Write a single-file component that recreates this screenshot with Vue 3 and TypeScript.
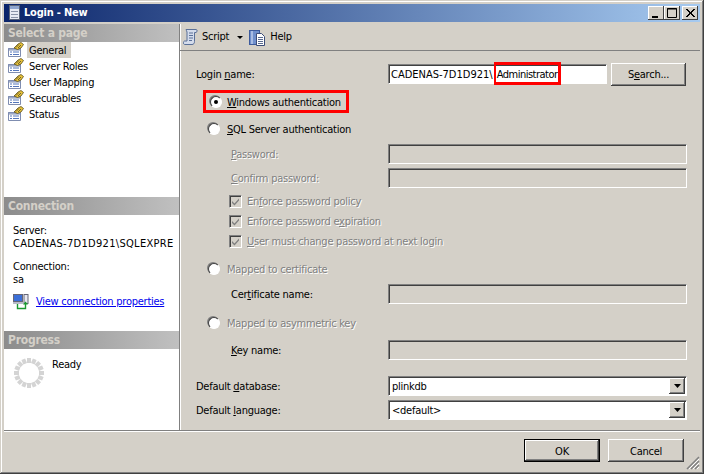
<script setup lang="ts">
const pages = ['General', 'Server Roles', 'User Mapping', 'Securables', 'Status']
const spokes = Array.from({ length: 16 }, (_, i) => i * 22.5)
</script>

<template>
  <div class="window">
    <header class="titlebar">
      <svg class="appicon" width="14" height="16" viewBox="0 0 14 16">
        <rect x="1.500" y="0.500" width="10" height="14" fill="#e8ecf4" stroke="#5a6478" />
        <rect x="2" y="1" width="9" height="3" fill="#8fa6d0" />
        <rect x="3" y="6" width="7" height="1" fill="#8a94a8" />
        <rect x="3" y="9" width="7" height="1" fill="#8a94a8" />
        <rect x="3" y="12" width="7" height="1" fill="#8a94a8" />
      </svg>
      <span class="title">Login - New</span>
      <span class="caption-btns">
        <span class="cap"><svg width="16" height="14" viewBox="0 0 16 14"><rect x="4" y="10" width="6" height="2" fill="#000" /></svg></span>
        <span class="cap"><svg width="16" height="14" viewBox="0 0 16 14"><path d="M3.500 2.500h9v9h-9z M3 3h10" fill="none" stroke="#000" /></svg></span>
        <span class="cap close"><svg width="16" height="14" viewBox="0 0 16 14"><path d="M4 3l8 8M5 3l8 8M12 3l-8 8M13 3l-8 8" fill="none" stroke="#000" /></svg></span>
      </span>
    </header>

    <div class="main">
      <aside class="side">
        <div class="side-head">Select a page</div>
        <ul class="pages">
          <li v-for="(p, i) in pages" :key="p" class="page">
            <svg width="16" height="16" viewBox="0 0 16 16" class="page-icon">
              <path d="M0.500 6.500h12v8h-12z" fill="#fff" stroke="#7f8db0" />
              <path d="M0.500 6.500h12v1.500h-12z" fill="#b9c6de" stroke="#7f8db0" />
              <path d="M2 10h2M5 10h6M2 12.500h2M5 12.500h6" stroke="#5577bb" />
              <path d="M6 6l4-4 3-1.500 2.500 2-2.500 3.500-3.500 1.500z" fill="#e9c33a" stroke="#5a4c18" stroke-width=".8" />
              <path d="M8 5.500l3-3M10 6l3-3" stroke="#3a3a28" stroke-width=".7" />
            </svg>
            <span class="page-label" :class="{ on: i === 0 }">{{ p }}</span>
          </li>
        </ul>
        <div class="side-head">Connection</div>
        <div class="conn">
          <p class="conn-line">Server:</p>
          <p class="conn-line caps">CADENAS-7D1D921\SQLEXPRE</p>
          <p class="conn-line gap">Connection:</p>
          <p class="conn-line">sa</p>
          <div class="conn-link">
            <svg width="16" height="16" viewBox="0 0 16 16">
              <rect x="0.500" y="0.500" width="9" height="7" fill="#3b6fd8" stroke="#667" />
              <rect x="0" y="8" width="10" height="2" fill="#b8bcc8" />
              <rect x="11" y="0.500" width="4" height="9" fill="#e8e8f0" stroke="#667" />
              <path d="M4.500 10v4.500h8V10" fill="none" stroke="#1a9a30" stroke-width="1.400" />
              <path d="M10 10.500h5l-2.500-3z" fill="#1a9a30" />
            </svg>
            <a class="link" href="#">View connection properties</a>
          </div>
        </div>
        <div class="side-head">Progress</div>
        <div class="progress">
          <svg width="30" height="30" viewBox="0 0 30 30" class="spinner">
            <rect v-for="a in spokes" :key="a" x="13" y="0" width="4" height="5" fill="#d4d4d4" :transform="`rotate(${a} 15 15)`" />
          </svg>
          <span>Ready</span>
        </div>
      </aside>

      <section class="content">
        <div class="toolbar">
          <svg width="16" height="18" viewBox="0 0 16 18">
            <path d="M3 1.500h10c1.500 0 1.500 2.500 0 3h-1.500v9c0 2-1 3-2.500 3H1.500c-1.500-.5-1.500-3 0-3.500H4v-9C4 3.500 3 2 3 1.500z" fill="#d4dcec" stroke="#5a7098" />
            <path d="M6 5h4M6 7.500h4M6 10h4M6 12.500h3" stroke="#5a7098" />
          </svg>
          <span class="tool-text">Script</span>
          <svg width="6" height="3" viewBox="0 0 6 3" class="caret"><path d="M0 0h6L3 3z" fill="#000" /></svg>
          <span class="tool-sep"></span>
          <svg width="17" height="17" viewBox="0 0 17 17">
            <rect x="0.500" y="1.500" width="10" height="14" fill="#6f8fcc" stroke="#3c5a9c" />
            <path d="M3 2v13" stroke="#a8bce4" stroke-width="2" />
            <path d="M7.500 4.500h5l3 3v9h-8z" fill="#fff" stroke="#3c4c78" />
            <path d="M9 8.500h5M9 10.500h5M9 12.500h5M9 14.500h5" stroke="#5a6a90" />
          </svg>
          <span class="tool-text help">Help</span>
        </div>

        <form class="form" @submit.prevent>
          <div class="row login-row">
            <label class="lab"><span>Login <u>n</u>ame:</span></label>
            <div class="login-input">
              <span class="field-text"><span class="caps-plain">CADENAS-7D1D921\</span><span class="admin">Administrator</span></span>
              <span class="red-mark"></span>
            </div>
            <button class="btn search" type="button">S<u>e</u>arch...</button>
          </div>

          <div class="opt-win">
            <span class="radio checked"></span>
            <span class="t"><u>W</u>indows authentication</span>
          </div>

          <div class="opt sql">
            <span class="radio"></span>
            <span class="t"><u>S</u>QL Server authentication</span>
          </div>

          <div class="row pw first">
            <label class="lab sub off"><u>P</u>assword:</label>
            <div class="input wide"></div>
          </div>
          <div class="row pw">
            <label class="lab sub off"><u>C</u>onfirm password:</label>
            <div class="input wide"></div>
          </div>

          <div class="check first">
            <span class="box"><svg width="9" height="9" viewBox="0 0 9 9"><path d="M1 4l2.500 2.500L8 1.500v2L3.500 8.500 1 6z" fill="#808080" /></svg></span>
            <span class="t off">En<u>f</u>orce password policy</span>
          </div>
          <div class="check">
            <span class="box"><svg width="9" height="9" viewBox="0 0 9 9"><path d="M1 4l2.500 2.500L8 1.500v2L3.500 8.500 1 6z" fill="#808080" /></svg></span>
            <span class="t off">Enforce password e<u>x</u>piration</span>
          </div>
          <div class="check">
            <span class="box"><svg width="9" height="9" viewBox="0 0 9 9"><path d="M1 4l2.500 2.500L8 1.500v2L3.500 8.500 1 6z" fill="#808080" /></svg></span>
            <span class="t off"><u>U</u>ser must change password at next login</span>
          </div>

          <div class="opt cert">
            <span class="radio"></span>
            <span class="t off">Mapped to certificate</span>
          </div>
          <div class="row name cert-name">
            <label class="lab sub">Cer<u>t</u>ificate name:</label>
            <div class="input wide"></div>
          </div>

          <div class="opt asym">
            <span class="radio"></span>
            <span class="t off">Mapped to asymmetric key</span>
          </div>
          <div class="row name key-name">
            <label class="lab sub"><u>K</u>ey name:</label>
            <div class="input wide"></div>
          </div>

          <div class="row db">
            <label class="lab">Default <u>d</u>atabase:</label>
            <div class="input wide white">
              <span class="field-text">plinkdb</span>
              <span class="arrow"><svg width="7" height="4" viewBox="0 0 7 4"><path d="M0 0h7L3.500 4z" fill="#000" /></svg></span>
            </div>
          </div>
          <div class="row lang">
            <label class="lab">Default <u>l</u>anguage:</label>
            <div class="input wide white">
              <span class="field-text">&lt;default&gt;</span>
              <span class="arrow"><svg width="7" height="4" viewBox="0 0 7 4"><path d="M0 0h7L3.500 4z" fill="#000" /></svg></span>
            </div>
          </div>
        </form>
      </section>
    </div>

    <footer class="footer">
      <button class="btn ok" type="button">OK</button>
      <button class="btn cancel" type="button">Cancel</button>
      <svg class="grip" width="14" height="14" viewBox="0 0 14 14">
        <path d="M13 1L1 13M13 5L5 13M13 9l-4 4" stroke="#808080" stroke-width="1.500" fill="none" />
        <path d="M13 3L3 13M13 7l-6 6M13 11l-2 2" stroke="#fff" fill="none" />
      </svg>
    </footer>
  </div>
</template>

<style>
html, body { margin: 0; padding: 0; overflow: hidden; }
</style>

<style scoped>
.window {
  width: 704px;
  height: 474px;
  box-sizing: border-box;
  padding: 4px;
  display: flex;
  flex-direction: column;
  background: #d4d0c8;
  box-shadow: inset -1px -1px 0 #404040, inset 1px 1px 0 #d4d0c8, inset -2px -2px 0 #808080, inset 2px 2px 0 #fff;
  font: 11px/14px "DejaVu Sans Condensed", "DejaVu Sans", sans-serif;
  font-stretch: condensed;
  letter-spacing: -0.25px;
  color: #000;
}
u { text-decoration: underline; text-underline-offset: 1px; }
p { margin: 0; }

.titlebar {
  height: 18px;
  flex: none;
  display: flex;
  align-items: center;
  background: linear-gradient(90deg, #0a246a, #a6caf0);
  padding: 0 2px;
}
.appicon { margin: 0 2px 0 2px; }
.title { color: #fff; font-weight: 700; font-size: 11px; letter-spacing: -0.2px; }
.caption-btns { margin-left: auto; display: flex; gap: 0; }
.cap {
  width: 16px;
  height: 14px;
  background: #d4d0c8;
  box-shadow: inset -1px -1px 0 #404040, inset 1px 1px 0 #fff;
  display: block;
}
.cap svg { display: block; }
.close { margin-left: 2px; }

.main {
  flex: 1;
  min-height: 0;
  display: flex;
  margin-top: 2px;
  border-bottom: 1px solid #808080;
  box-shadow: 0 1px 0 #fff;
}
.side {
  width: 175px;
  flex: none;
  display: flex;
  flex-direction: column;
  background: #fff;
  border-right: 1px solid #808080;
  box-shadow: 1px 0 0 #fff;
}
.side-head {
  height: 18px;
  flex: none;
  box-sizing: border-box;
  padding-left: 4px;
  line-height: 19px;
  font-weight: 700;
  font-size: 12px;
  color: #d4d0c8;
  background: linear-gradient(90deg, #8c8c8c, #c0c0c0);
}
.pages {
  margin: 0;
  padding: 0;
  list-style: none;
  height: 155px;
  flex: none;
}
.page { height: 16px; display: flex; align-items: center; padding-left: 4px; }
.page-icon { flex: none; margin-right: 3px; }
.page-label { height: 16px; line-height: 18px; padding: 0 2px; }
.page-label.on { background: #d4d0c8; padding-right: 5px; }

.conn { height: 116px; flex: none; box-sizing: border-box; padding: 10px 0 0 9px; white-space: nowrap; }
.conn-line { line-height: 12.500px; }
.conn-line.gap { margin-top: 11px; }
.caps { letter-spacing: 0.3px; }
.conn-link { display: flex; align-items: center; gap: 7px; margin-top: 8px; }
.link { color: #0000ee; text-decoration: underline; }

.progress { flex: 1; display: flex; align-items: flex-start; padding: 9px 0 0 10px; }
.spinner { margin-right: 8px; }
.progress span { margin-top: 0; }

.content { flex: 1; min-width: 0; display: flex; flex-direction: column; }
.toolbar {
  height: 27px;
  flex: none;
  box-sizing: border-box;
  display: flex;
  align-items: center;
  padding-left: 3px;
  border-bottom: 1px solid #808080;
}
.tool-text { margin-left: 3px; }
.tool-text.help { margin-left: 4px; }
.caret { margin-left: 8px; }
.tool-sep { width: 6px; }

.form { flex: 1; padding-left: 16px; padding-right: 13px; }
.row { display: flex; align-items: center; height: 20px; }
.lab { width: 192px; flex: none; padding-top: 2px; box-sizing: border-box; }
.lab.sub { padding-left: 35px; }
.t { padding-top: 2px; }
.off { color: #808080; text-shadow: 1px 1px 0 #fff; }
.off u { text-decoration-color: #808080; }

.input {
  height: 20px;
  box-sizing: border-box;
  flex: 1;
  border: 1px solid;
  border-color: #808080 #fff #fff #808080;
  box-shadow: inset 1px 1px 0 #404040;
  position: relative;
  display: flex;
  align-items: center;
}
.input.white { background: #fff; }
.field-text { padding: 2px 0 0 3px; white-space: nowrap; }
.arrow {
  position: absolute;
  right: 1px;
  top: 1px;
  width: 16px;
  height: 16px;
  background: #d4d0c8;
  box-shadow: inset -1px -1px 0 #404040, inset 1px 1px 0 #fff, inset -2px -2px 0 #808080;
  display: flex;
  align-items: center;
  justify-content: center;
}

.login-row { margin-top: 13px; height: 20px; }
.login-input {
  width: 219px;
  height: 20px;
  flex: none;
  box-sizing: border-box;
  background: #fff;
  border: 1px solid;
  border-color: #808080 #fff #fff #808080;
  box-shadow: inset 1px 1px 0 #404040;
  position: relative;
  display: flex;
  align-items: center;
}
.login-input .field-text { padding-left: 2px; }
.caps-plain { letter-spacing: 0; }
.admin { margin-left: 4px; letter-spacing: -0.5px; }
.red-mark {
  position: absolute;
  left: 105px;
  top: -3px;
  width: 67px;
  height: 23px;
  box-sizing: border-box;
  border: 3px solid #f00;
  border-left-width: 2px;
}
.search { width: 75px; height: 23px; margin-left: 4px; }

.btn {
  background: #d4d0c8;
  border: 0;
  padding: 2px 0 0;
  font: inherit;
  letter-spacing: inherit;
  color: #000;
  box-shadow: inset -1px -1px 0 #404040, inset 1px 1px 0 #fff, inset -2px -2px 0 #808080;
}

.opt-win {
  width: 146px;
  height: 23px;
  box-sizing: border-box;
  border: 3px solid #f00;
  margin: 6px 0 0 7px;
  display: flex;
  align-items: center;
  padding-left: 4px;
  gap: 5px;
  white-space: nowrap;
}
.opt { display: flex; align-items: center; gap: 7px; height: 16px; padding-left: 12px; white-space: nowrap; }
.sql { margin-top: 8px; }
.cert { margin-top: 10px; }
.asym { margin-top: 11px; }

.radio {
  width: 12px;
  height: 12px;
  flex: none;
  border-radius: 50%;
  background: #fff;
  box-sizing: border-box;
  border: 1px solid;
  border-color: #404040 #fff #fff #404040;
  box-shadow: -1px -1px 0 #808080;
  position: relative;
}
.radio.checked::after {
  content: "";
  position: absolute;
  left: 3px;
  top: 3px;
  width: 4px;
  height: 4px;
  border-radius: 50%;
  background: #000;
}

.pw { margin-top: 4px; }
.pw.first { margin-top: 7px; }

.check { display: flex; align-items: center; gap: 5px; height: 20px; padding-left: 33px; white-space: nowrap; }
.check.first { margin-top: 3px; }
.box {
  width: 13px;
  height: 13px;
  box-sizing: border-box;
  background: #d4d0c8;
  border: 1px solid;
  border-color: #808080 #fff #fff #808080;
  box-shadow: inset 1px 1px 0 #404040;
  display: flex;
  align-items: center;
  justify-content: center;
  flex: none;
}
.box svg { display: block; }

.cert-name { margin-top: 7px; }
.key-name { margin-top: 9px; }
.db { margin-top: 16px; }
.lang { margin-top: 4px; }

.footer {
  height: 39px;
  flex: none;
  display: flex;
  justify-content: flex-end;
  align-items: flex-start;
  gap: 8px;
  padding: 8px 16px 0 0;
  box-sizing: border-box;
  position: relative;
}
.ok, .cancel { width: 76px; height: 23px; }
.ok { outline: 1px solid #000; outline-offset: -1px; box-shadow: inset -2px -2px 0 #404040, inset 2px 2px 0 #fff, inset -3px -3px 0 #808080; }
.grip { position: absolute; right: 0; bottom: 0; }
</style>
